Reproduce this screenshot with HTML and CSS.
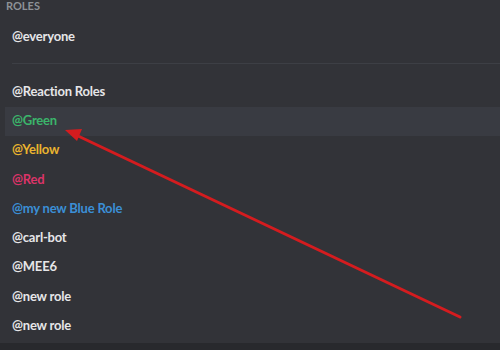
FILE: index.html
```html
<!DOCTYPE html>
<html lang="en">
  <head>
    <meta charset="UTF-8" />
    <title>Roles</title>
    <link rel="stylesheet" href="styles.css">
  </head>
  <body>
    <div class="panel">
      <div class="section-title">Roles</div>
      <ul class="role-list">
        <li class="role">@everyone</li>
      </ul>
      <div class="divider"><span></span></div>
      <ul class="role-list">
        <li class="role">@Reaction Roles</li>
        <li class="role selected green">@Green</li>
        <li class="role yellow">@Yellow</li>
        <li class="role red">@Red</li>
        <li class="role blue">@my new Blue Role</li>
        <li class="role">@carl-bot</li>
        <li class="role">@MEE6</li>
        <li class="role">@new role</li>
        <li class="role">@new role</li>
      </ul>
    </div>
    <div class="footer"></div>

    <!-- annotation arrow -->
    <svg class="arrow" width="500" height="350" viewBox="0 0 500 350">
      <line x1="460" y1="317" x2="76" y2="135" stroke="#d41c1f" stroke-width="3" stroke-linecap="round" />
      <polygon points="65,130 82,129 77,141" fill="#d41c1f" />
    </svg>
  </body>
</html>
```

FILE: styles.css
```css
body {
  margin: 0;
  width: 500px;
  height: 350px;
  overflow: hidden;
  background: #2a2b30;
  font-family: Lato, "Open Sans", sans-serif;
  position: relative;
}

.panel {
  height: 343px;
  background: #323338;
  padding-left: 5px;
  box-sizing: border-box;
}

.section-title {
  height: 13px;
  line-height: 12px;
  margin-bottom: 9.5px;
  padding-left: 1px;
  font-size: 11px;
  font-weight: 700;
  color: #8e9297;
  text-transform: uppercase;
}

.role-list {
  list-style: none;
  margin: 0;
  padding: 0;
}

.role {
  height: 29.25px;
  line-height: 27px;
  padding-left: 7px;
  font-size: 13px;
  font-weight: 700;
  letter-spacing: -0.2px;
  color: #e6e6e8;
}

.role.selected {
  background: #393b42;
}

.green { color: #3bb56b; }
.yellow { color: #eab42f; }
.red { color: #dc3468; }
.blue { color: #3b8fd6; }

.divider {
  padding: 11.25px 0 13.75px 7px;
}

.divider span {
  display: block;
  height: 1px;
  background: #3d3f45;
}

.footer {
  height: 7px;
  background: #28292d;
}

.arrow {
  position: absolute;
  top: 0;
  left: 0;
}
```
